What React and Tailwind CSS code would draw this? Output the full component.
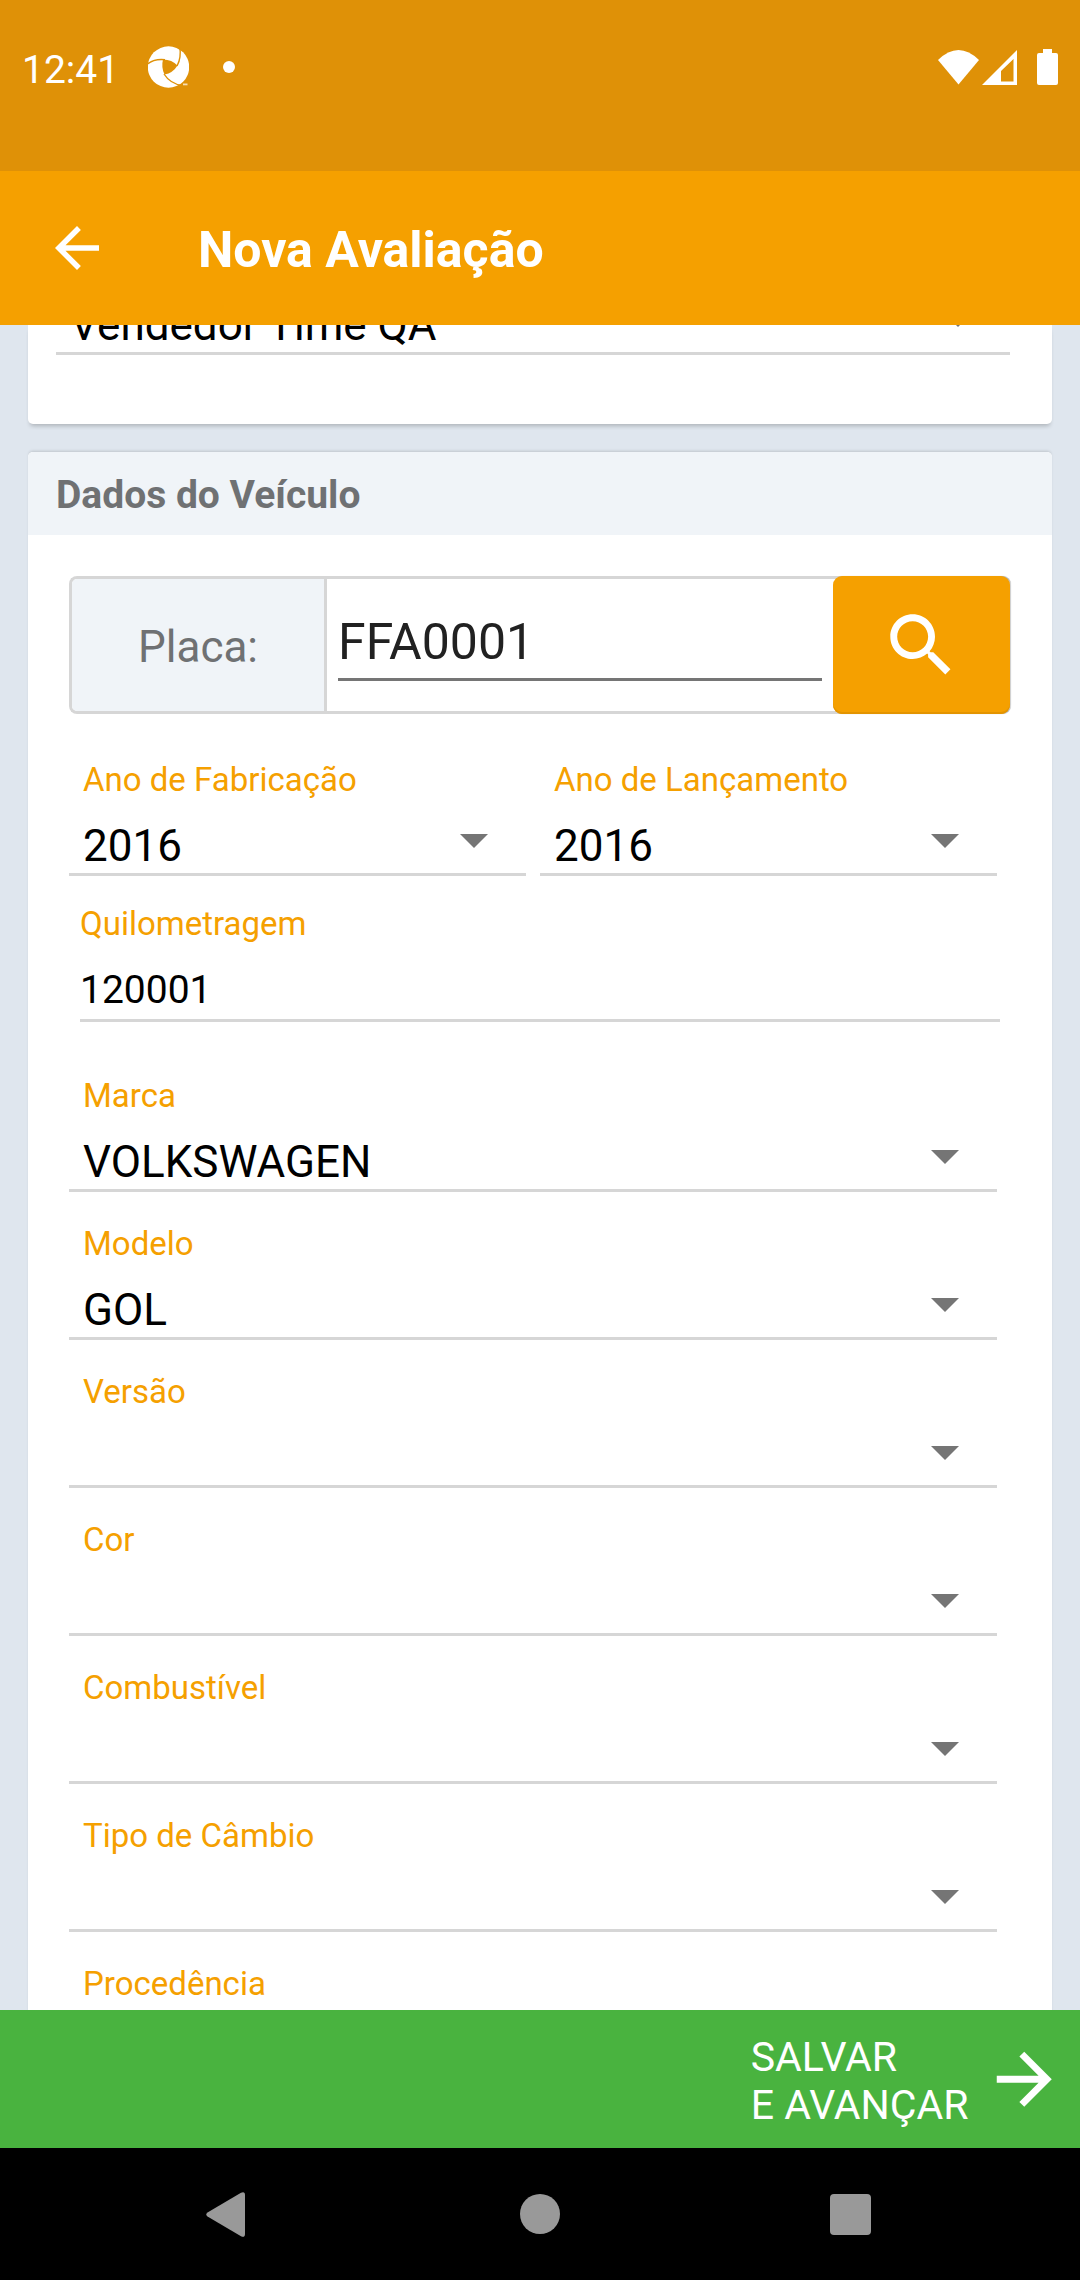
const Arrow = ({ className = "" }) => (
  <svg viewBox="0 0 24 24" fill="currentColor" className={className}>
    <path d="M20 11H7.83l5.59-5.59L12 4l-8 8 8 8 1.41-1.41L7.83 13H20v-2z" />
  </svg>
);

const StatusBar = () => (
  <div className="flex h-[171px] items-start bg-[#df9107] text-white">
    <div className="flex h-[134px] w-full items-center pl-[22px] pr-[22px]">
      <span className="w-[126px] pt-[6px] text-[39px] leading-[45px]">12:41</span>
      <svg viewBox="0 0 41 42" className="h-[42px] w-[41px]">
        <circle cx="20.5" cy="21" r="20.7" fill="#fff" />
        <path d="M15 13.500 Q24 13.500 29.500 19.500 Q25 27 16.500 28.500 Q13 21 15 13.500Z" fill="#df9107" />
        <g fill="none" stroke="#df9107" strokeWidth="1.4">
          <path d="M-1 18.500 Q6 12.500 17 13.800" />
          <path d="M29 20 Q33.500 12 31.800 1" />
          <path d="M16 28 Q22 37.500 34 39.500" />
        </g>
        <path d="M32 42 L42 30 V42Z" fill="#df9107" />
        <path d="M35 37.500h4.500v1.800H35z" fill="#fff" opacity="0.7" />
      </svg>
      <span className="ml-[34px] size-3 rounded-full bg-white" />
      <div className="ml-auto flex items-center">
        <svg viewBox="0 0 41 35" className="h-[35px] w-[41px]" fill="#fff">
          <path d="M0 10 Q20.500 -10 41 10 L20.500 34.500Z" />
        </svg>
        <svg viewBox="0 0 35 35" className="ml-[3px] h-[35px] w-[35px]" fill="#fff" fillRule="evenodd">
          <path d="M35 0V35H0Z M31.500 9L19 21V31.500H31.500Z" />
        </svg>
        <svg viewBox="0 0 21 36" className="ml-[20px] h-[36px] w-[21px]" fill="#fff">
          <path d="M6 0h9v4h4a2 2 0 0 1 2 2v28a2 2 0 0 1-2 2H2a2 2 0 0 1-2-2V6a2 2 0 0 1 2-2h4z" />
        </svg>
      </div>
    </div>
  </div>
);

const Caret = () => (
  <svg viewBox="0 0 28 14" className="h-[14px] w-[28px] shrink-0" fill="#757575">
    <path d="M0 0H28L14 14Z" />
  </svg>
);

const Select = ({ label, value = "", className = "" }) => (
  <div className={`flex h-[148px] flex-col border-b-[3px] border-[#d6d6d6] pl-[14px] pt-[32px] ${className}`}>
    <span className="text-[33px] leading-[39px] text-[#f5a000]">{label}</span>
    <div className="mt-auto flex h-[54px] items-end justify-between pr-[38px]">
      <span className="mb-px text-[44px] leading-[52px] text-black">{value}</span>
      <span className="flex pb-[25px]"><Caret /></span>
    </div>
  </div>
);

const fields = [
  { label: "Marca", value: "VOLKSWAGEN" },
  { label: "Modelo", value: "GOL" },
  { label: "Versão" },
  { label: "Cor" },
  { label: "Combustível" },
  { label: "Tipo de Câmbio" },
  { label: "Procedência" },
];

export default function App() {
  return (
    <div className="flex h-[2280px] w-[1080px] flex-col overflow-hidden bg-[#dfe6ee] font-['Roboto',sans-serif]">
      <StatusBar />
      <header className="flex h-[154px] shrink-0 items-center bg-[#f5a000] pl-[44px] text-white">
        <Arrow className="size-[66px]" />
        <h1 className="ml-[88px] pt-[4px] text-[50px] font-bold leading-[58px]">Nova Avaliação</h1>
      </header>

      <main className="flex h-[1685px] shrink-0 flex-col gap-[28px] overflow-hidden px-[28px]">
        <section className="flex h-[99px] shrink-0 flex-col rounded-b-[5px] bg-white pl-[28px] pr-[42px] shadow-[0_4px_4px_-2px_rgba(0,0,0,0.22)]">
          <div className="flex h-[30px] shrink-0 items-end justify-between border-b-[3px] border-[#d6d6d6] pl-[14px] pr-[38px]">
            <span className="mb-px text-[44px] leading-[52px] text-black">Vendedor Time QA</span>
            <span className="flex pb-[25px]"><Caret /></span>
          </div>
        </section>

        <section className="flex shrink-0 flex-col rounded-t-[5px] bg-white shadow-[0_-2px_3px_-1px_rgba(0,0,0,0.15)]">
          <h2 className="h-[83px] rounded-t-[5px] bg-[#f0f4f8] pl-[28px] pt-[21px] text-[39px] font-bold leading-[45px] text-[#6f7173]">
            Dados do Veículo
          </h2>
          <div className="flex flex-col pl-[41px] pt-[41px]">
            <div className="flex h-[138px] w-[942px] rounded-[8px] border-[3px] border-r-0 border-[#d6d6d6]">
              <div className="flex w-[255px] items-center justify-center rounded-l-[5px] border-r-[3px] border-[#d6d6d6] bg-[#f0f4f8] pt-[4px] text-[44px] text-[#6f7173]">
                Placa:
              </div>
              <div className="ml-[11px] flex h-[102px] w-[484px] items-end border-b-[3px] border-[#757575] pb-[7px] text-[50px] leading-[58px] text-[#212121]">
                FFA0001
              </div>
              <button className="-my-[3px] ml-[11px] flex h-[138px] w-[177px] shrink-0 items-center justify-center rounded-[9px] bg-[#f5a000] shadow-[1px_0_1px_rgba(0,0,0,0.2),inset_0_-2px_0_#e39400]">
                <svg viewBox="0 0 24 24" className="size-[82.5px]" fill="#fff">
                  <path d="M15.5 14h-.79l-.28-.27C15.410 12.590 16 11.110 16 9.500 16 5.910 13.090 3 9.500 3S3 5.910 3 9.500 5.910 16 9.500 16c1.610 0 3.090-.59 4.230-1.570l.27.28v.79l5 4.990L20.490 19l-4.990-5zm-6 0C7.010 14 5 11.990 5 9.500S7.010 5 9.500 5 14 7.010 14 9.500 11.990 14 9.500 14z" />
                </svg>
              </button>
            </div>
            <div className="mt-[14px] flex gap-[14px]">
              <Select label="Ano de Fabricação" value="2016" className="w-[457px]" />
              <Select label="Ano de Lançamento" value="2016" className="w-[457px]" />
            </div>
            <div className="ml-[11px] flex h-[146px] w-[920px] flex-col border-b-[3px] border-[#d6d6d6] pt-[28px]">
              <span className="text-[33px] leading-[39px] text-[#f5a000]">Quilometragem</span>
              <span className="mt-[25px] text-[39px] leading-[45px] text-black">120001</span>
            </div>
            <div className="mt-[22px] flex flex-col">
              {fields.map((f) => (
                <Select key={f.label} {...f} className="w-[928px]" />
              ))}
            </div>
          </div>
        </section>
      </main>

      <button className="flex h-[138px] shrink-0 items-center justify-end bg-[#49b33f] pr-[15px] text-left text-white">
        <span className="pt-[3px] text-[41px] leading-[48px]">
          SALVAR
          <br />E AVANÇAR
        </span>
        <Arrow className="ml-[14px] size-[82.5px] rotate-180" />
      </button>

      <nav className="flex h-[132px] shrink-0 items-center bg-black pl-[206px] text-[#999]">
        <svg viewBox="0 0 39 45" className="h-[45px] w-[39px]" fill="currentColor">
          <path d="M1.500 20.500 L35 .7Q39 -1 39 3V42Q39 46 35 44.300L1.500 24.500Q-1 22.500 1.500 20.500Z" />
        </svg>
        <span className="ml-[275px] size-10 rounded-full bg-current" />
        <span className="ml-[270px] size-[41px] rounded-[4px] bg-current" />
      </nav>
    </div>
  );
}
